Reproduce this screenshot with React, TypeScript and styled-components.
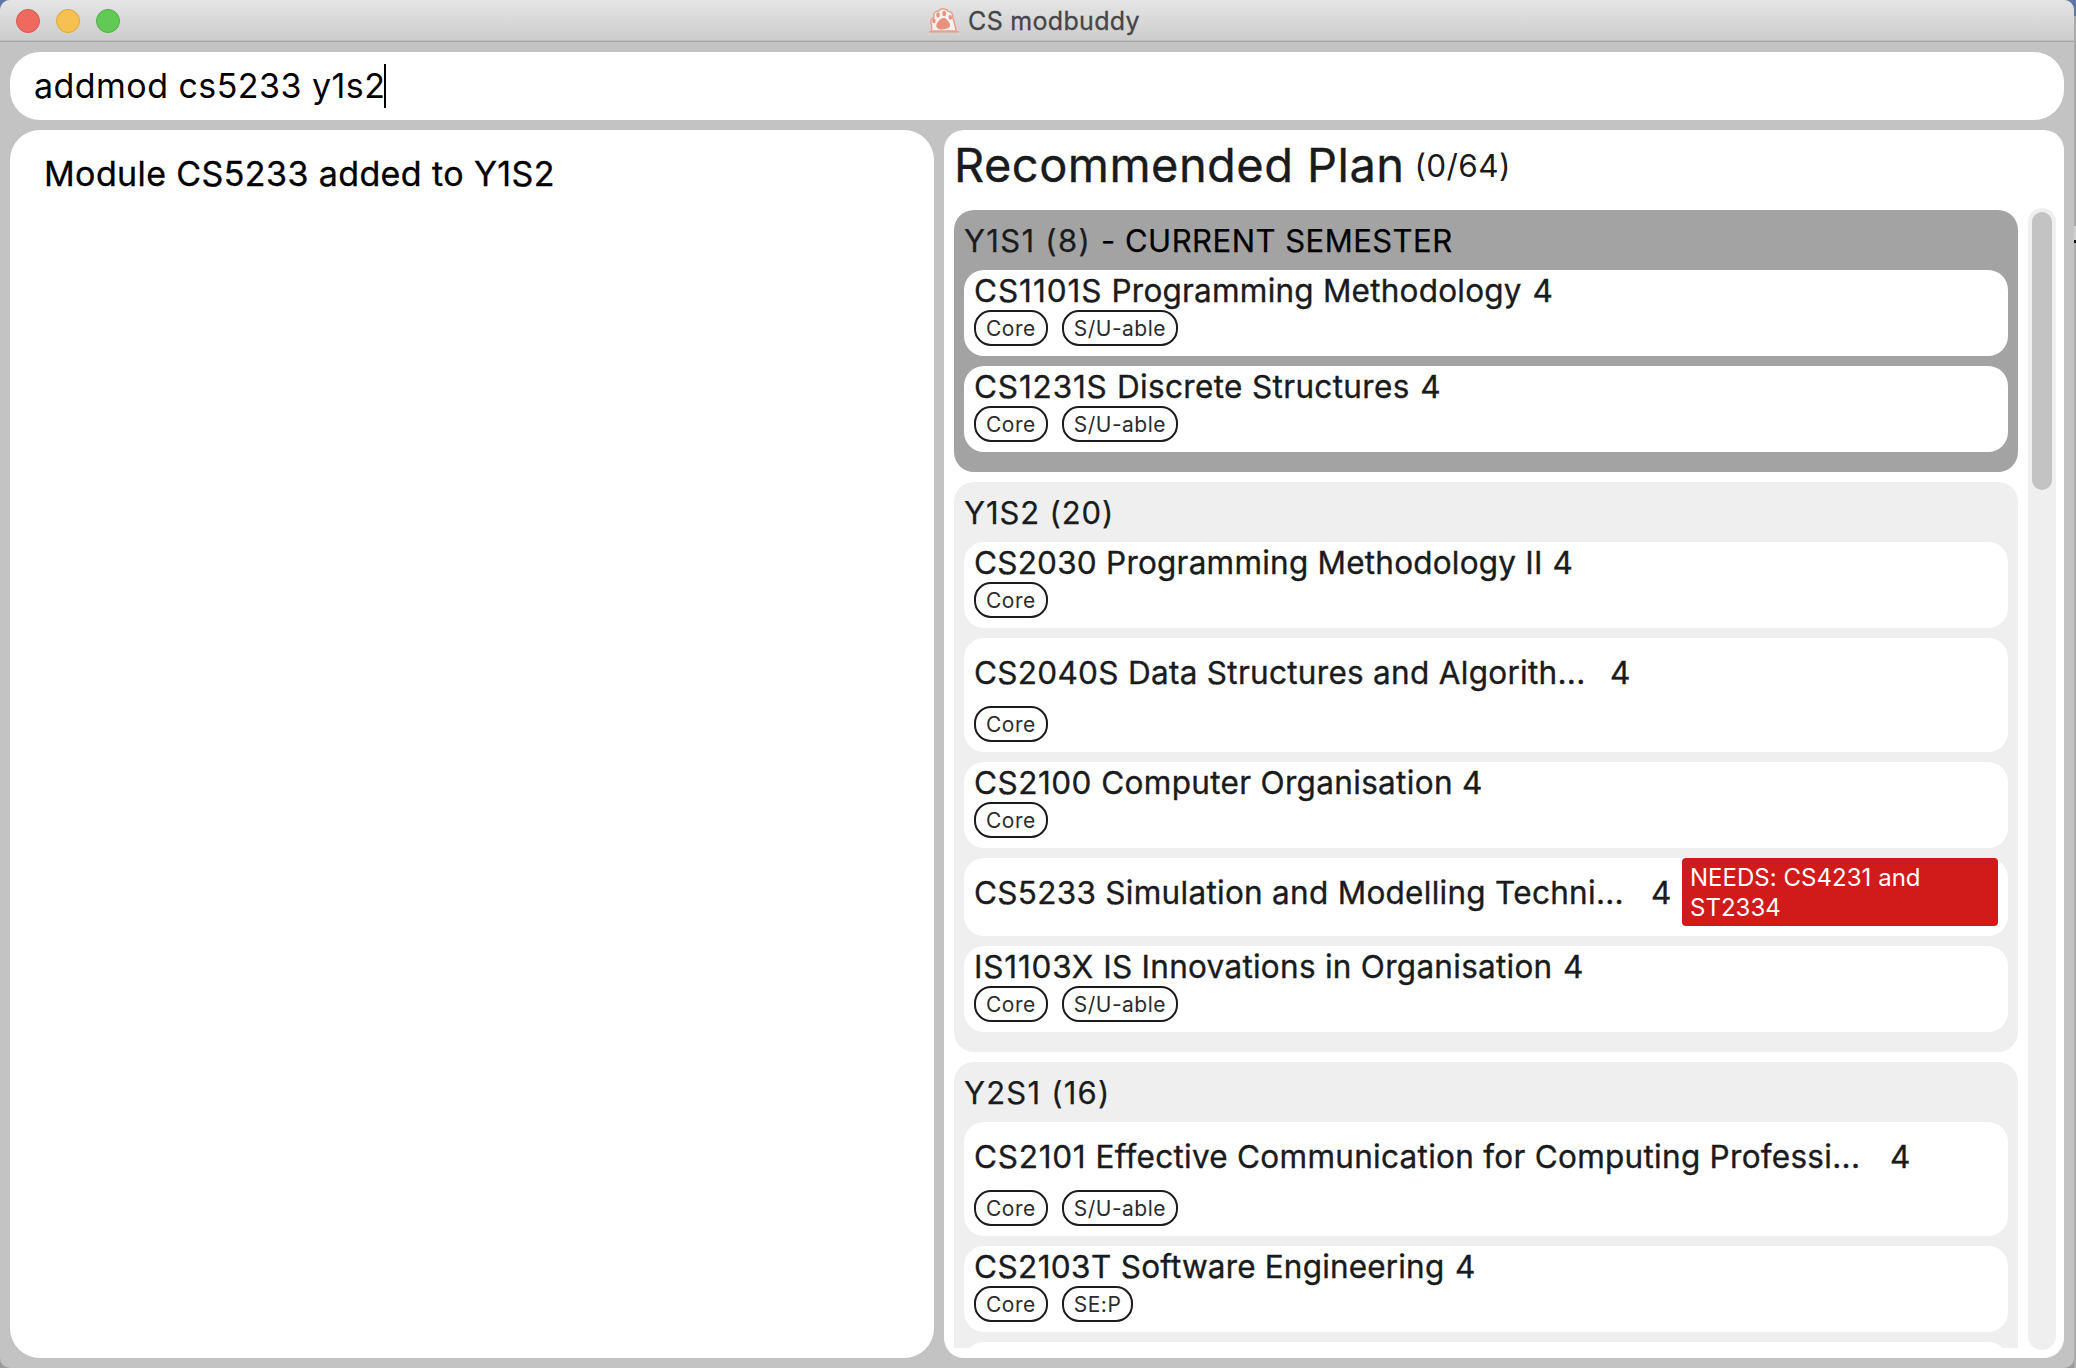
import React from 'react';
import styled, { createGlobalStyle } from 'styled-components';

const GlobalStyle = createGlobalStyle`
  *, *::before, *::after { box-sizing: border-box; }
  body {
    margin: 0;
    font-family: Inter, 'Liberation Sans', sans-serif;
    color: #1a1b1c;
    overflow: hidden;
  }
`;

const Desktop = styled.div`
  display: flex;
  width: 2076px;
  height: 1368px;
  background: linear-gradient(#5b78a8 0 16px, #9b9b9b 16px);
`;

const Window = styled.div`
  display: flex;
  flex-direction: column;
  width: 2074px;
  height: 1368px;
  overflow: hidden;
  background: #c3c3c3;
  border-radius: 10px;
`;

const WindowEdge = styled.div`
  width: 2px;
  background: linear-gradient(
    to bottom,
    #5b78a8 0 16px,
    #a9a9a9 16px 226px,
    #cfcfcf 226px 240px,
    #111 240px 243px,
    #adadad 243px
  );
`;

const TitleBar = styled.header`
  display: grid;
  grid-template-columns: 1fr auto 1fr;
  align-items: center;
  flex: none;
  height: 42px;
  padding: 0 22px 0 16px;
  background: linear-gradient(#e5e5e5, #cccccc);
  border-bottom: 1px solid #a6a6a6;
  box-shadow: inset 0 -1px 0 #bdbdbd;
`;

const Lights = styled.div`
  display: flex;
  gap: 16px;
`;

const Light = styled.span<{ $fill: string; $edge: string }>`
  width: 24px;
  height: 24px;
  border-radius: 50%;
  background: ${(p) => p.$fill};
  border: 1px solid ${(p) => p.$edge};
`;

const WindowTitle = styled.div`
  display: flex;
  align-items: center;
  gap: 8px;
  padding-top: 1px;
  font-size: 25px;
  line-height: 40px;
  letter-spacing: 0.31px;
  color: #464646;
  -webkit-text-stroke: 0.3px currentColor;
`;

const Paw = styled.svg`
  width: 32px;
  height: 26px;
`;

const Body = styled.main`
  display: flex;
  flex-direction: column;
  gap: 10px;
  flex: 1;
  min-height: 0;
  padding: 10px;
`;

const CommandBox = styled.div`
  display: flex;
  align-items: center;
  flex: none;
  height: 68px;
  padding: 0 0 1px 24px;
  border-radius: 30px;
  background: #fff;
  color: #000;
  font-size: 34px;
  letter-spacing: 0.45px;
  white-space: pre;
`;

const Caret = styled.span`
  width: 2px;
  height: 44px;
  margin-left: -1px;
  background: #000;
`;

const Columns = styled.div`
  display: flex;
  gap: 10px;
  flex: 1;
  min-height: 0;
`;

const ResultPanel = styled.section`
  width: 924px;
  padding: 24px 34px;
  border-radius: 30px;
  background: #fff;
  color: #000;
  font-size: 34px;
  line-height: 40px;
  letter-spacing: 0.39px;
  -webkit-text-stroke: 0.35px currentColor;
`;

const PlanPanel = styled.section`
  display: flex;
  flex-direction: column;
  width: 1120px;
  padding: 0 8px 8px 10px;
  border-radius: 20px;
  background: #fff;
`;

const PlanHeader = styled.div`
  display: flex;
  align-items: center;
  flex: none;
  gap: 10px;
  height: 70px;
  margin-bottom: 8px;
`;

const PlanTitle = styled.h1`
  margin: 0;
  padding-bottom: 2px;
  font-size: 47px;
  font-weight: 400;
  letter-spacing: 0.45px;
  -webkit-text-stroke: 0.35px currentColor;
`;

const PlanCount = styled.span`
  font-size: 31.5px;
  letter-spacing: 0.4px;
`;

const PlanScroll = styled.div`
  display: flex;
  justify-content: space-between;
  flex: 1;
  min-height: 0;
`;

const SemesterList = styled.div`
  display: flex;
  flex-direction: column;
  gap: 10px;
  width: 1064px;
  margin: 2px 0;
  overflow: hidden;
`;

const Track = styled.div`
  width: 28px;
  padding: 4px;
  border-radius: 14px;
  background: #efefef;
`;

const Thumb = styled.div`
  height: 278px;
  border-radius: 10px;
  background: #c3c3c3;
`;

const Semester = styled.div<{ $current?: boolean }>`
  display: flex;
  flex-direction: column;
  flex: none;
  gap: 10px;
  padding: 0 10px 20px;
  border-radius: 20px;
  background: ${(p) => (p.$current ? '#a3a3a3' : '#efefef')};
`;

const SemesterHeader = styled.div`
  display: flex;
  gap: 10px;
  height: 60px;
  margin-bottom: -10px;
  font-size: 31px;
  line-height: 61px;
  white-space: nowrap;
  -webkit-text-stroke: 0.25px currentColor;
`;

const Tracked = styled.span<{ $tracking: number; $strong?: boolean }>`
  letter-spacing: ${(p) => p.$tracking}px;
  color: ${(p) => (p.$strong ? '#000' : 'inherit')};
`;

const Card = styled.article`
  flex: none;
  padding: 0 10px 10px;
  border-radius: 20px;
  background: #fff;
`;

const CardTitle = styled.div<{ $tall?: boolean }>`
  display: flex;
  height: ${(p) => (p.$tall ? 68 : 40)}px;
  font-size: 31.5px;
  line-height: ${(p) => (p.$tall ? 69 : 41)}px;
  white-space: nowrap;
`;

const ModuleName = styled.span<{ $width: number; $tracking: number }>`
  width: ${(p) => p.$width}px;
  letter-spacing: ${(p) => p.$tracking}px;
  -webkit-text-stroke: 0.35px currentColor;
`;

const Credits = styled.span`
  -webkit-text-stroke: 0.35px currentColor;
`;

const Needs = styled.div`
  width: 316px;
  height: 68px;
  margin-left: auto;
  padding: 5px 8px 3px;
  border-radius: 4px;
  background: #d11a1a;
  color: #fff;
  font-size: 24px;
  line-height: 30px;
  letter-spacing: 0.03px;
  white-space: normal;
`;

const Tags = styled.div`
  display: flex;
  gap: 14px;
`;

const Tag = styled.span`
  height: 36px;
  padding: 0 10px;
  border: 2px solid #1a1b1c;
  border-radius: 17px;
  font-size: 21px;
  line-height: 34px;
  letter-spacing: 0.5px;
  color: #2b2c2d;
`;

type Module = {
  code: string;
  name: string;
  width: number;
  tracking: number;
  codeTracking?: number;
  tags: string[];
  tall?: boolean;
  needs?: string;
};

type SemesterData = {
  label: string;
  tracking: number;
  current?: boolean;
  modules: Module[];
};

const semesters: SemesterData[] = [
  {
    label: 'Y1S1 (8)',
    tracking: 1.3,
    current: true,
    modules: [
      { code: 'CS1101S', name: 'Programming Methodology', width: 558.5, tracking: 0.22, codeTracking: 0.95, tags: ['Core', 'S/U-able'] },
      { code: 'CS1231S', name: 'Discrete Structures', width: 446.2, tracking: 0.35, codeTracking: 0.85, tags: ['Core', 'S/U-able'] },
    ],
  },
  {
    label: 'Y1S2 (20)',
    tracking: 0.87,
    modules: [
      { code: 'CS2030', name: 'Programming Methodology II', width: 578.6, tracking: 0.22, tags: ['Core'] },
      { code: 'CS2040S', name: 'Data Structures and Algorith...', width: 636, tracking: 0.29, tags: ['Core'], tall: true },
      { code: 'CS2100', name: 'Computer Organisation', width: 488, tracking: 0.32, codeTracking: 0.5, tags: ['Core'] },
      {
        code: 'CS5233',
        name: 'Simulation and Modelling Techni...',
        width: 677,
        tracking: 0.28,
        tags: [],
        tall: true,
        needs: 'NEEDS: CS4231 and ST2334',
      },
      { code: 'IS1103X', name: 'IS Innovations in Organisation', width: 589, tracking: 0.27, codeTracking: 0.8, tags: ['Core', 'S/U-able'] },
    ],
  },
  {
    label: 'Y2S1 (16)',
    tracking: 1.21,
    modules: [
      {
        code: 'CS2101',
        name: 'Effective Communication for Computing Professi...',
        width: 916,
        tracking: 0.28,
        codeTracking: 0.75,
        tags: ['Core', 'S/U-able'],
        tall: true,
      },
      { code: 'CS2103T', name: 'Software Engineering', width: 481, tracking: 0.17, codeTracking: 0.4, tags: ['Core', 'SE:P'] },
      { code: '', name: '', width: 0, tracking: 0, tags: [], tall: true },
    ],
  },
];

function PawIcon() {
  return (
    <Paw viewBox="0 0 32 26">
      <path
        d="M3.6 23 L3.6 17 C2 13.5 3 10 5.8 9.4 C5.2 5 7.5 2.6 10.7 3 C12 .4 18 -.2 20 3.2 C23.5 3.5 25 6 24.7 9.6 C26.2 13 27.4 19 28.2 23 Z"
        fill="#f6f1ef"
        stroke="#e8a08e"
        strokeWidth="1.5"
      />
      <path d="M1 23.8 H31" stroke="#e8a08e" strokeWidth="1.5" />
      <g fill="#e8917f">
        <ellipse cx="5.9" cy="12.8" rx="1.7" ry="2.5" />
        <ellipse cx="10" cy="6.9" rx="1.8" ry="2.6" />
        <ellipse cx="16.2" cy="5.5" rx="1.9" ry="2.7" />
        <ellipse cx="22.3" cy="9.3" rx="1.7" ry="2.4" transform="rotate(-15 22.3 9.3)" />
        <path d="M15.2 10 C18.5 9.6 19.3 12.6 20.8 14 C23.5 16.8 21.5 20.8 18 20.7 C15.5 20.6 14.5 22 12 21.5 C8.5 20.9 7.3 17 9.3 14.8 C11 13 12 10.4 15.2 10 Z" />
      </g>
    </Paw>
  );
}

function ModuleCard({ module }: { module: Module }) {
  return (
    <Card>
      <CardTitle $tall={module.tall}>
        {module.name && (
          <>
            <ModuleName $width={module.width} $tracking={module.tracking}>
              <Tracked $tracking={module.codeTracking ?? module.tracking}>{module.code}</Tracked>{' '}
              {module.name}
            </ModuleName>
            <Credits>4</Credits>
          </>
        )}
        {module.needs && <Needs>{module.needs}</Needs>}
      </CardTitle>
      {module.tags.length > 0 && (
        <Tags>
          {module.tags.map((tag) => (
            <Tag key={tag}>{tag}</Tag>
          ))}
        </Tags>
      )}
    </Card>
  );
}

export default function App() {
  return (
    <>
      <GlobalStyle />
      <Desktop>
        <Window>
          <TitleBar>
            <Lights>
              <Light $fill="#ee6a5f" $edge="#d9574d" />
              <Light $fill="#f6c151" $edge="#dca63c" />
              <Light $fill="#62c955" $edge="#4fae42" />
            </Lights>
            <WindowTitle>
              <PawIcon />
              CS modbuddy
            </WindowTitle>
          </TitleBar>
          <Body>
            <CommandBox>
              addmod cs5233 y1s2
              <Caret />
            </CommandBox>
            <Columns>
              <ResultPanel>Module CS5233 added to Y1S2</ResultPanel>
              <PlanPanel>
                <PlanHeader>
                  <PlanTitle>Recommended Plan</PlanTitle>
                  <PlanCount>(0/64)</PlanCount>
                </PlanHeader>
                <PlanScroll>
                  <SemesterList>
                    {semesters.map((semester) => (
                      <Semester key={semester.label} $current={semester.current}>
                        <SemesterHeader>
                          <Tracked $tracking={semester.tracking}>{semester.label}</Tracked>
                          {semester.current && (
                            <Tracked $tracking={0.48} $strong>
                              - CURRENT SEMESTER
                            </Tracked>
                          )}
                        </SemesterHeader>
                        {semester.modules.map((module, index) => (
                          <ModuleCard key={index} module={module} />
                        ))}
                      </Semester>
                    ))}
                  </SemesterList>
                  <Track>
                    <Thumb />
                  </Track>
                </PlanScroll>
              </PlanPanel>
            </Columns>
          </Body>
        </Window>
        <WindowEdge />
      </Desktop>
    </>
  );
}
